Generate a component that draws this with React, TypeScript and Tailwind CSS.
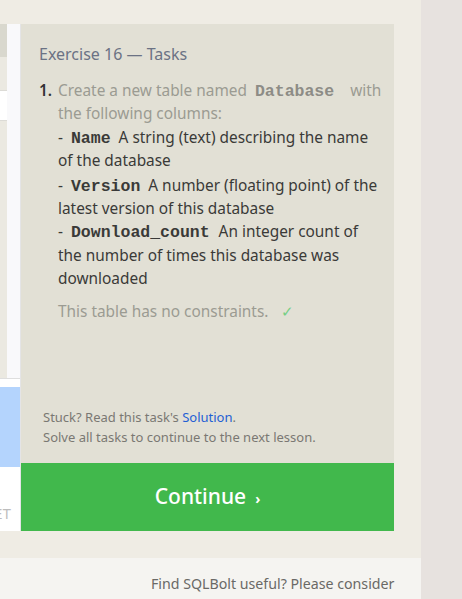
export default function App() {
  const mono = "font-['Liberation_Mono',monospace] font-bold text-[16.5px] leading-none";
  return (
    <div className="flex w-[462px] h-[599px] overflow-hidden font-['Noto_Sans',sans-serif]">
      <div className="flex flex-col w-[421px] shrink-0">
        <div className="bg-[#efece4] h-[558px] pt-[24px] flex">
          {/* left editor strip */}
          <div className="w-[21px] h-[507px] flex flex-col border-r border-[#e4e4e6]">
            <div className="flex h-[354px]">
              <div className="w-[7px] flex flex-col">
                <div className="h-[33px] bg-[#d9d8ce]" />
                <div className="h-[33px] bg-[#ebe9e1]" />
                <div className="h-[31px] bg-white border-y border-[#dcdbd6]" />
                <div className="flex-1 bg-[#ebe9e1]" />
              </div>
              <div className="flex-1 bg-[#f9f9fb]" />
            </div>
            <div className="flex-1 bg-white border-t border-[#dedede] pt-[8px] flex flex-col">
              <div className="h-[80px] bg-[#b4d4fd]" />
              <div className="flex-1 flex justify-end items-end pb-[6px] pr-[9px] overflow-hidden">
                <span className="whitespace-nowrap text-[14px] text-[#bdbdbd] font-['Liberation_Sans',sans-serif]">RESET</span>
              </div>
            </div>
          </div>
          {/* task panel */}
          <div className="w-[373px] h-[507px] flex flex-col">
            <div className="flex-1 bg-[#e2e0d5] flex flex-col pl-[18px] pr-[12px] pt-[20px] pb-[16px]">
              <div className="text-[16px] leading-[20px] text-[#6b7284]">Exercise 16 — Tasks</div>
              <div className="mt-[15px] flex text-[15.4px] leading-[23.4px]">
                <div className="w-[19px] shrink-0 font-semibold text-[#333]">1.</div>
                <div className="flex flex-col">
                  <div className="text-[#9b9b92]">
                    Create a new table named
                    <code className={`${mono} ml-[8px] mr-[16px] text-[#8d8c86]`}>Database</code>
                    with the following columns:
                  </div>
                  <div className="text-[#3a3a38]">
                    -<code className={`${mono} mx-[8px] text-[#3a3a38]`}>Name</code>A string (text) describing the name of the database
                  </div>
                  <div className="mt-[1px] text-[#3a3a38]">
                    -<code className={`${mono} mx-[8px] text-[#3a3a38]`}>Version</code>A number (floating point) of the latest version of this database
                  </div>
                  <div className="text-[#3a3a38]">
                    -<code className={`${mono} ml-[8px] mr-[9px] text-[#3a3a38]`}>Download_count</code>An integer count of the number of times this database was downloaded
                  </div>
                  <div className="mt-[9px] text-[#9b9b92]">
                    This table has no constraints.
                    <span className="ml-[13px] text-[#75cf85]">✓</span>
                  </div>
                </div>
              </div>
              <div className="mt-auto pl-[4px] text-[13px] leading-[20px] text-[#7a7873]">
                <div>
                  Stuck? Read this task's <span className="text-[#1f5fd4]">Solution</span>.
                </div>
                <div>Solve all tasks to continue to the next lesson.</div>
              </div>
            </div>
            <div className="h-[68px] bg-[#41b84c] flex items-center justify-center text-white">
              <span className="text-[21px] font-medium">Continue</span>
              <span className="ml-[9px] text-[14px] font-bold mt-[2px]">›</span>
            </div>
          </div>
        </div>
        <div className="flex-1 bg-[#f5f4f1] pl-[151px] pt-[15px] text-[14.2px] leading-[22px] text-[#6a6966] whitespace-nowrap overflow-hidden">
          Find SQLBolt useful? Please consider
        </div>
      </div>
      <div className="flex-1 bg-[#e7e2df]" />
    </div>
  );
}
